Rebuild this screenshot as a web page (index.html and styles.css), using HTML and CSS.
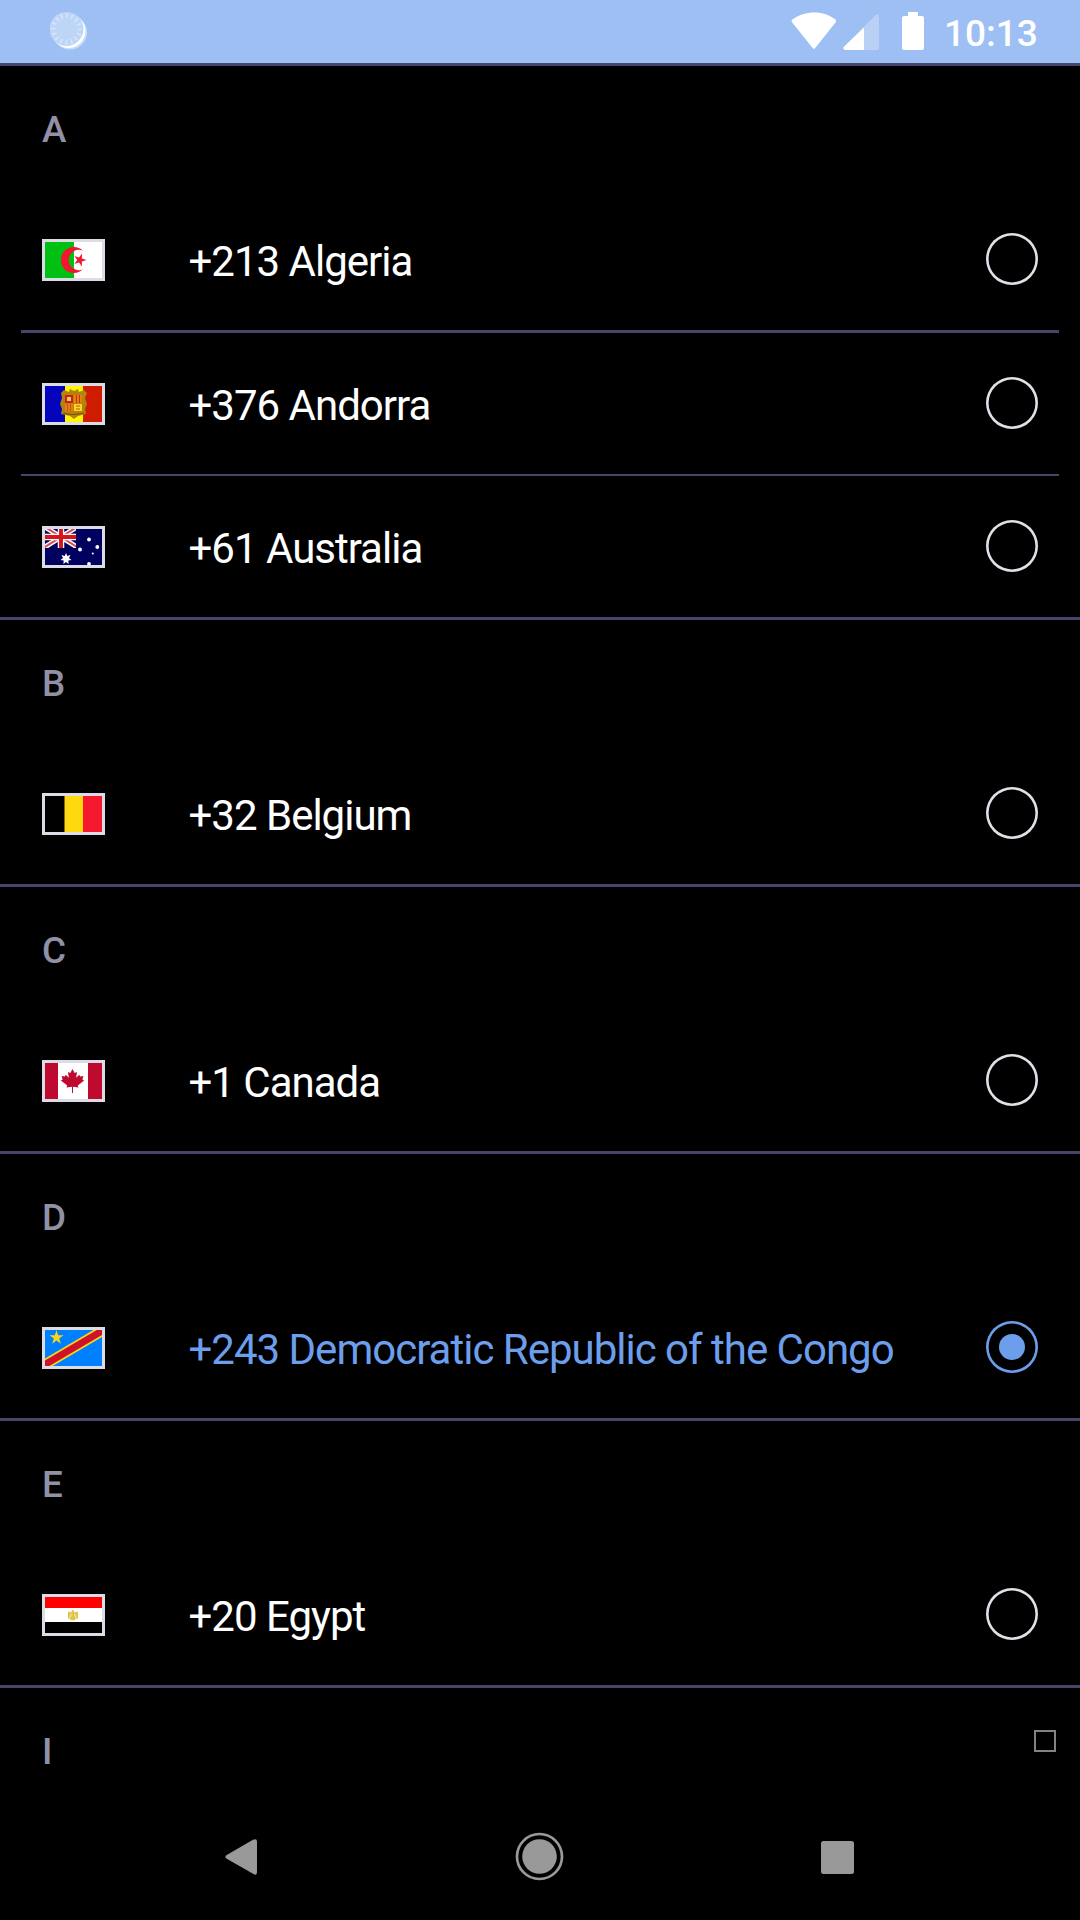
FILE: index.html
```html
<!DOCTYPE html>
<html lang="en">
<head>
<meta charset="utf-8">
<meta name="viewport" content="width=device-width">
<title>Country code</title>
<link rel="stylesheet" href="styles.css">
</head>
<body>
<div class="screen">
  <header class="status-bar">
    <svg class="status-spinner" width="38" height="38" viewBox="0 0 38 38">
      <circle cx="20" cy="20.500" r="17" fill="#c9ddf8"/>
      <circle cx="18.500" cy="19" r="17" fill="#fff"/>
      <circle cx="16.500" cy="17" r="17" fill="#bdd5f6"/>
      <circle cx="16.500" cy="17" r="13.200" fill="none" stroke="#d6e5fa" stroke-width="5" stroke-dasharray="1.600 3.584" stroke-dashoffset=".8"/>
    </svg>
    <svg class="status-icons" width="134" height="40" viewBox="0 0 134 40">
      <path d="M1 10.200Q0 8.700 1.300 7.600C14 -1.900 33 -1.900 44.400 7.600Q45.700 8.700 44.700 10.200L24.600 35.600Q22.900 38 21.200 35.600Z" fill="#fff"/>
      <path d="M53.500 38Q51.500 36.500 53 34.800L84.400 3.200Q88 .6 88 4.500V36Q88 38 86 38Z" fill="#bad0f5"/>
      <path d="M73 15.500V38H53.800Q51.500 36.500 53 34.800Z" fill="#fff"/>
      <path d="M117 0h10v4h4q2 0 2 2v30q0 2-2 2h-18q-2 0-2-2V6q0-2 2-2h4z" fill="#fff"/>
    </svg>
    <span class="clock">10:13</span>
  </header>

  <main class="country-list">
    <section class="group">
      <h2 class="letter">A</h2>
      <div class="country">
        <svg class="flag" viewBox="0 0 63 42">
          <path fill="#fff" d="M0 0h63v42H0z"/><path fill="#00c113" d="M0 0h32v42H0z"/>
          <path fill="#f5152f" d="M41 11.700A13 13 0 1 0 41 30.300A10.200 10.200 0 1 1 41 11.700Z"/>
          <path fill="#f5152f" d="M44.500 21L32.400 24.900L39.900 14.600V27.400L32.400 17.100Z"/>
        </svg>
        <span class="name">+213 Algeria</span><span class="radio"></span>
      </div>
      <div class="country">
        <svg class="flag" viewBox="0 0 63 42">
          <path fill="#0404bd" d="M0 0h23v42H0z"/><path fill="#fff600" d="M23 0h18v42H23z"/><path fill="#cf1b00" d="M41 0h22v42H41z"/>
          <path fill="#b3830d" d="M19 10l3-3 5 2 1-3 4 2 4-2 1 3 5-2 3 3-2 5 2 6-2 5 1 5-8 2-4 3-4-3-9-2 1-5-2-5 2-6z"/>
          <path fill="#cc2010" d="M23 12h8v8h-8z"/><path fill="#f2cf75" d="M25 14h4v4h-4z"/>
          <path fill="#e67e12" d="M32 12h8v8h-8zM23 21h8v7h-8z"/><path fill="#f7d92a" d="M32 21h8v7h-8z"/>
          <path stroke="#c52c0c" d="M34.500 12v8M37.500 12v8"/>
          <path stroke="#c9530c" d="M25.500 21v7M28.500 21v7M34 23h4M34 26h4"/>
          <path fill="none" stroke="#7b5312" stroke-width="1.200" d="M21 30q10 3 21 0"/>
        </svg>
        <span class="name">+376 Andorra</span><span class="radio"></span>
      </div>
      <div class="country">
        <svg class="flag" viewBox="0 0 63 42">
          <path fill="#00005f" d="M0 0h63v42H0z"/>
          <svg x="3" y="3" width="31" height="19" viewBox="3 3 31 19">
            <path stroke="#fff" stroke-width="5" d="M3 1l32 20M3 21l32-20"/>
            <path stroke="#d94a50" stroke-width="2" d="M3 1l32 20M3 21l32-20"/>
            <path stroke="#fff" stroke-width="6.500" d="M19 3v19M3 11h31"/>
            <path stroke="#d9141f" stroke-width="3.900" d="M19 3v19M3 11h31"/>
          </svg>
          <path fill="#fff" d="M24 27l1.300 3 3.200-1-1.500 3 2.500 2-3.200.6.300 3.400L24 36l-2.600 2 .3-3.400-3.200-.6 2.500-2-1.500-3 3.200 1z"/>
          <g fill="#fff"><circle cx="47" cy="13.500" r="1.900"/><circle cx="55.300" cy="21" r="1.900"/><circle cx="38" cy="23.500" r="1.900"/><circle cx="50.800" cy="27.500" r="1"/><circle cx="47" cy="38" r="1.900"/></g>
        </svg>
        <span class="name">+61 Australia</span><span class="radio"></span>
      </div>
    </section>

    <section class="group">
      <h2 class="letter">B</h2>
      <div class="country">
        <svg class="flag" viewBox="0 0 63 42"><path d="M0 0h23v42H0z"/><path fill="#ffd90f" d="M22.500 0H41v42H22.500z"/><path fill="#f5192f" d="M41 0h22v42H41z"/></svg>
        <span class="name">+32 Belgium</span><span class="radio"></span>
      </div>
    </section>

    <section class="group">
      <h2 class="letter">C</h2>
      <div class="country">
        <svg class="flag" viewBox="0 0 63 42">
          <path fill="#fff" d="M0 0h63v42H0z"/><path fill="#bf0a30" d="M0 0h16v42H0zM46 0h17v42H46z"/>
          <path fill="#bf0a30" d="M30.500 9l2.200 4 2.400-1.100-1 5.800 3.200-2.900.8 1.600 3.300-.5-1 3.500 1.700 1.200-6.300 4.900.7 2.100-5.500-.8V33h-1v-6.200l-5.500.8.700-2.100-6.300-4.900 1.700-1.200-1-3.500 3.300.5.800-1.600 3.200 2.900-1-5.800 2.400 1.100z"/>
        </svg>
        <span class="name">+1 Canada</span><span class="radio"></span>
      </div>
    </section>

    <section class="group">
      <h2 class="letter">D</h2>
      <div class="country selected">
        <svg class="flag" viewBox="0 0 63 42">
          <path fill="#0080ff" d="M0 0h63v42H0z"/>
          <path stroke="#f5d51d" stroke-width="10.500" d="M-3 41L66 .5"/><path stroke="#d01225" stroke-width="7" d="M-3 41L66 .5"/>
          <path fill="#f9d616" d="M14.500 3.200l1.700 5.100h5.300l-4.300 3.200 1.600 5.200-4.300-3.200-4.300 3.200 1.600-5.200-4.300-3.200h5.300z"/>
        </svg>
        <span class="name">+243 Democratic Republic of the Congo</span><span class="radio"></span>
      </div>
    </section>

    <section class="group">
      <h2 class="letter">E</h2>
      <div class="country">
        <svg class="flag" viewBox="0 0 63 42">
          <path fill="#fff" d="M0 0h63v42H0z"/><path fill="#f00" d="M0 0h63v14H0z"/><path d="M0 28h63v14H0z"/>
          <path fill="#dfc64a" d="M26 17.500l3.200 1 .8-2.500h1.500l.8 2.500 3.700-1v7l-3 .5v1.300h-4.600V25L26 24.500z"/><path stroke="#f7edc0" d="M29.500 20l-2 4M32.300 20l2 4"/>
        </svg>
        <span class="name">+20 Egypt</span><span class="radio"></span>
      </div>
    </section>

    <section class="group">
      <div class="letter-row"><h2 class="letter">I</h2><span class="index-mark"></span></div>
    </section>
  </main>

  <nav class="nav-bar">
    <svg width="33" height="38" viewBox="0 0 33 38"><path fill="#999" d="M1.300 17.300L28 1.700Q32 0 32 3.500V34Q32 38 28.500 36L1.300 20.500Q-.5 19 1.300 17.300Z"/></svg>
    <svg width="50" height="50" viewBox="0 0 50 50"><circle cx="25.500" cy="24.500" r="22.500" fill="none" stroke="#999" stroke-width="2.700"/><circle cx="25.500" cy="24.500" r="17.300" fill="#999"/></svg>
    <svg width="33" height="33" viewBox="0 0 33 33"><rect width="33" height="33" rx="2.500" fill="#999"/></svg>
  </nav>
</div>
</body>
</html>
```
FILE: styles.css
```css
* { box-sizing: border-box; }

body {
  margin: 0;
  background: #000;
  color: #fff;
  font-family: Roboto, sans-serif;
}

.screen {
  width: 1080px;
  height: 1920px;
  display: flex;
  flex-direction: column;
  overflow: hidden;
}

.status-bar {
  height: 63px;
  flex: none;
  display: flex;
  align-items: flex-start;
  padding: 12px 43px 0 50px;
  background: #9dbff3;
}

.status-icons { margin-left: auto; }

.clock {
  width: 93px;
  margin-left: 19px;
  font-size: 37px;
  font-weight: 500;
  line-height: 43px;
  text-align: right;
  white-space: nowrap;
}

.country-list {
  flex: 1;
  min-height: 0;
  overflow: hidden;
}

.group { border-top: 3px solid #46466a; }

.letter {
  height: 123px;
  margin: 0;
  padding: 42px 42px 0;
  color: #9191a6;
  font-size: 36.75px;
  font-weight: 500;
  line-height: 44px;
}

.letter-row {
  display: flex;
  justify-content: space-between;
}

.index-mark {
  width: 22px;
  height: 22px;
  margin: 42px 24px 0 0;
  border: 2px solid #828282;
}

.country {
  height: 141px;
  display: flex;
  align-items: flex-start;
  padding: 50px 42px 0;
}

.country + .country {
  height: 144px;
  margin: 0 21px;
  padding: 50px 21px 0;
  border-top: 3px solid #46466a;
}

.country + .country + .country {
  height: 143px;
  border-top-width: 2px;
}

.flag {
  width: 63px;
  height: 42px;
  flex: none;
  outline: 3px solid #dcdce6;
  outline-offset: -3px;
}

.name {
  flex: 1;
  margin-top: -2px;
  margin-left: 83.5px;
  font-size: 42px;
  line-height: 50px;
  letter-spacing: -1px;
  white-space: nowrap;
}

.radio {
  width: 52px;
  height: 52px;
  flex: none;
  margin-top: -6px;
  border-radius: 50%;
  box-shadow: inset 0 0 0 2.6px #e0e0e8;
}

.selected .name { color: #6d9eeb; }

.selected .radio {
  display: grid;
  place-items: center;
  box-shadow: inset 0 0 0 2.6px #6d9eeb;
}

.selected .radio::after {
  content: "";
  width: 26px;
  height: 26px;
  border-radius: 50%;
  background: #6d9eeb;
}

.nav-bar {
  height: 126px;
  flex: none;
  display: grid;
  grid-template-columns: 289px 306px 291px;
  justify-content: start;
  justify-items: center;
  align-items: center;
  padding-left: 97px;
}
```
